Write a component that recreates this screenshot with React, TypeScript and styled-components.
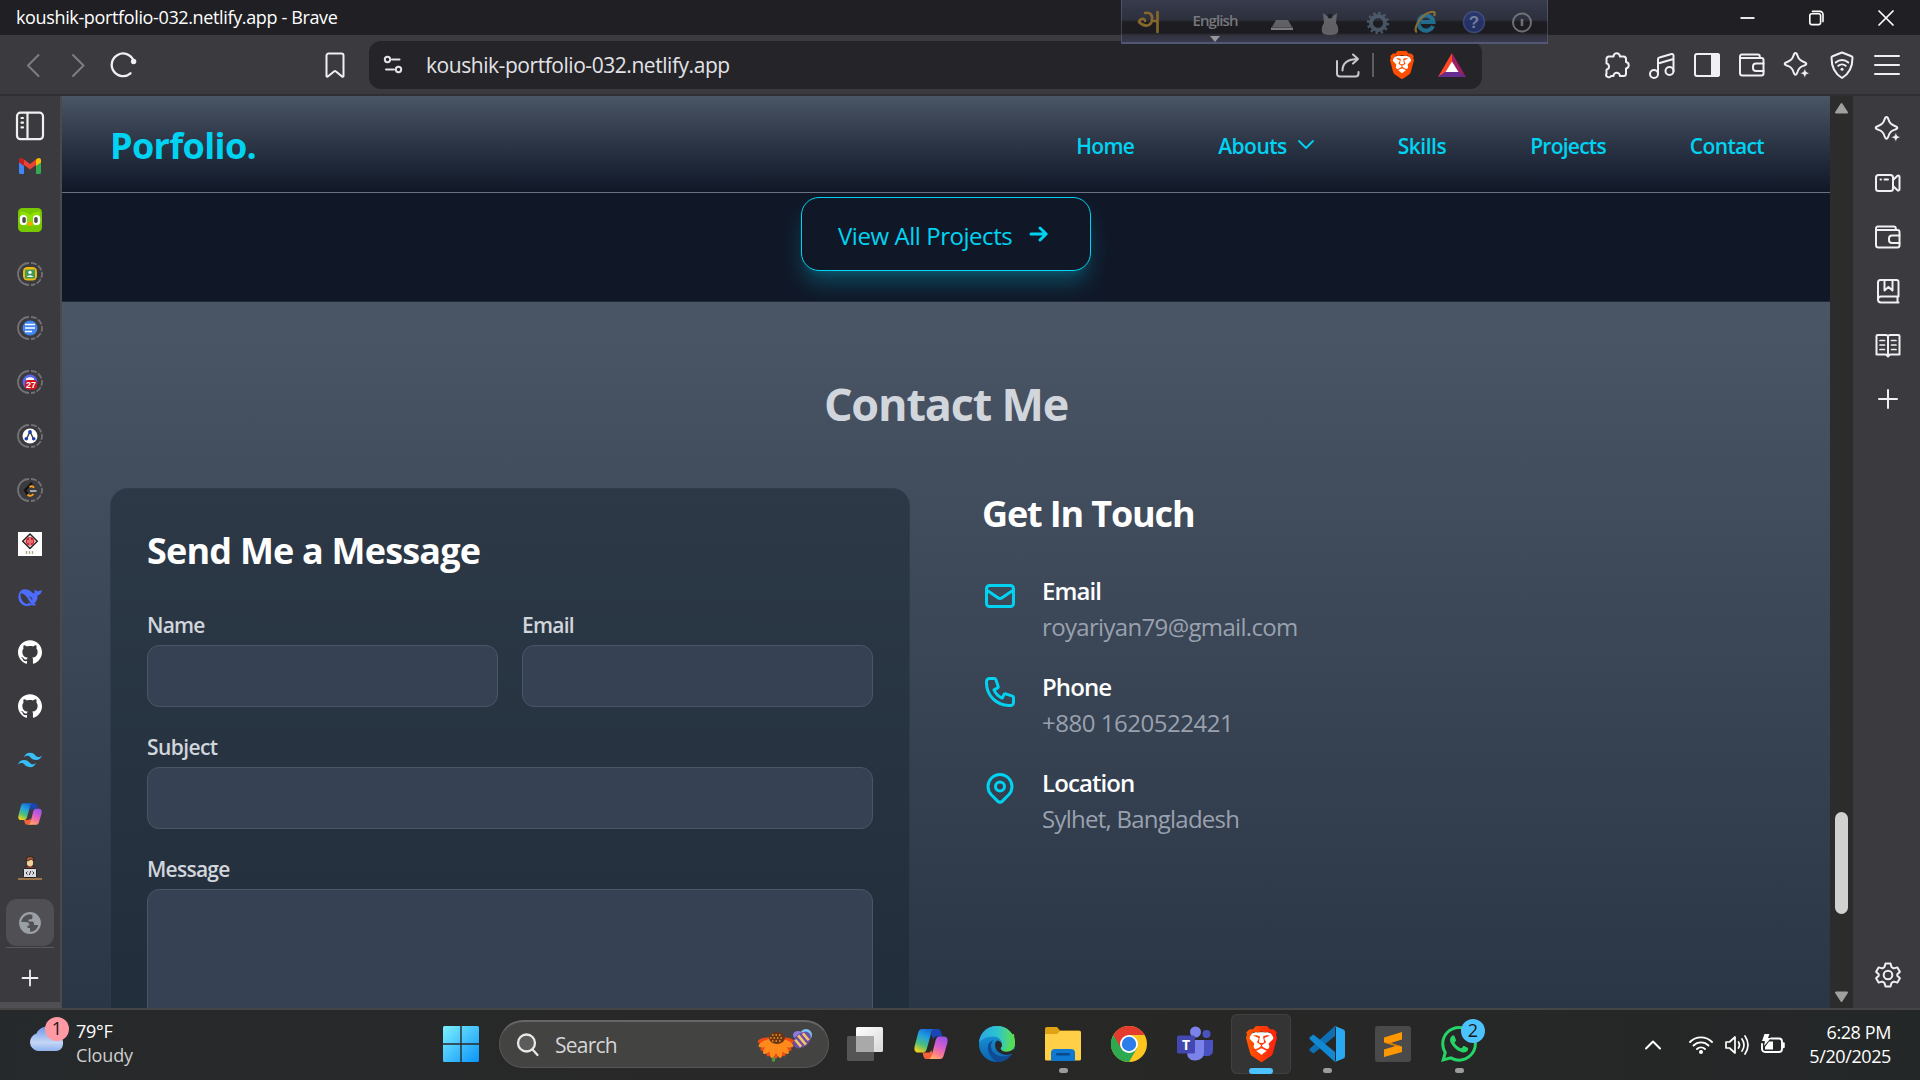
import React from "react";
import styled, { createGlobalStyle, css } from "styled-components";
import { SiBrave, SiTailwindcss, SiGithub, SiWhatsapp } from "react-icons/si";

const CYAN = "#00d3f2";
const CHROME = "#3b3a3e";
const ICON = "#f0f0f2";

const GlobalStyle = createGlobalStyle`
  *, *::before, *::after { box-sizing: border-box; }
  body { margin: 0; overflow: hidden; background: ${CHROME}; font-family: "Open Sans", "Noto Sans", sans-serif; }
  svg { display: block; flex: none; overflow: visible; }
  h1, h2, h3, p { margin: 0; }
`;

/* ---------- window ---------- */
const Desktop = styled.div`
  width: 1920px;
  height: 1080px;
  display: flex;
  flex-direction: column;
  position: relative;
  overflow: hidden;
`;
const TitleBar = styled.header`
  height: 35px;
  flex: none;
  background: #201f24;
  display: flex;
  align-items: center;
  justify-content: space-between;
  padding: 0 26px 0 16px;
`;
const WindowTitle = styled.div`
  color: #fff;
  font-size: 18px;
  letter-spacing: -0.36px;
  line-height: 35px;
`;
const WindowButtons = styled.div`
  display: flex;
  align-items: center;
  gap: 54px;
`;
const Toolbar = styled.div`
  height: 61px;
  flex: none;
  background: ${CHROME};
  border-bottom: 2px solid #302f33;
  display: flex;
  align-items: center;
  padding: 0 20px 0 21px;
`;
const NavButtons = styled.div`
  display: flex;
  align-items: center;
  gap: 20px;
  width: 303px;
`;
const BookmarkSlot = styled.div`
  width: 45px;
`;
const AddressBar = styled.div`
  width: 1113px;
  height: 48px;
  border-radius: 12px;
  background: #252429;
  display: flex;
  align-items: center;
  padding: 0 16px 0 14px;
`;
const Url = styled.span`
  color: #e3e3e6;
  font-size: 21px;
  letter-spacing: -0.45px;
  margin-left: 23px;
  flex: 1;
`;
const Divider = styled.span`
  width: 2px;
  height: 24px;
  background: #5e5d62;
  margin: 0 16px 0 11px;
`;
const Triangle = styled.svg`
  margin-left: 24px;
`;
const ToolbarIcons = styled.div`
  display: flex;
  align-items: center;
  gap: 17px;
  margin-left: auto;
`;
const Body = styled.div`
  height: 912px;
  flex: none;
  display: flex;
`;

/* ---------- side bars ---------- */
const TabRail = styled.aside`
  width: 62px;
  flex: none;
  background: ${CHROME};
  border-right: 2px solid #4a494d;
  border-bottom: 6px solid #505054;
  display: flex;
  flex-direction: column;
  align-items: center;
`;
const RailToggle = styled.div`
  height: 43px;
  padding-top: 15px;
`;
const Tab = styled.div`
  height: 54px;
  width: 60px;
  flex: none;
  display: flex;
  align-items: center;
  justify-content: center;
`;
const ActiveTab = styled(Tab)`
  width: 48px;
  height: 47px;
  margin-top: 4px;
  border-radius: 11px;
  background: #505054;
`;
const RailRule = styled.div`
  width: 48px;
  height: 1px;
  background: #59585c;
  margin-top: 1px;
`;
const NewTab = styled(Tab)`
  padding-top: 6px;
`;
const SideRail = styled.aside`
  width: 67px;
  flex: none;
  background: ${CHROME};
  display: flex;
  flex-direction: column;
  align-items: center;
  padding: 6px 0 6px 2px;
`;
const SideItem = styled(Tab)<{ $last?: boolean }>`
  ${(p) => p.$last && css`margin-top: auto;`}
`;
const ScrollTrack = styled.div`
  width: 23px;
  flex: none;
  background: #2c2c2c;
  display: flex;
  flex-direction: column;
  align-items: center;
  justify-content: space-between;
  padding: 6px 0 5px;
`;
const ScrollThumb = styled.div`
  width: 13px;
  height: 102px;
  border-radius: 7px;
  background: #d1d1d1;
  margin-top: 620px;
`;

/* ---------- web page ---------- */
const Page = styled.main`
  width: 1768px;
  flex: none;
  overflow: hidden;
  background: #101828;
`;
const SiteHeader = styled.nav`
  height: 97px;
  background: linear-gradient(in oklab to bottom, #4a5565, #101828);
  border-bottom: 1px solid #6a7282;
  display: flex;
  align-items: center;
  justify-content: space-between;
  padding: 3px 66px 0 48px;
`;
const Brand = styled.h1`
  color: ${CYAN};
  font-size: 36px;
  font-weight: 700;
  letter-spacing: -0.65px;
`;
const Links = styled.div`
  display: flex;
  gap: 84px;
`;
const NavLink = styled.a<{ $ls?: number }>`
  display: flex;
  align-items: center;
  gap: 11px;
  color: ${CYAN};
  font-size: 21px;
  font-weight: 600;
  letter-spacing: ${(p) => p.$ls ?? -0.7}px;
  line-height: 30px;
`;
const ProjectsEnd = styled.section`
  height: 109px;
  padding-top: 4px;
  display: flex;
  justify-content: center;
  align-items: flex-start;
  border-bottom: 1px solid #1e2939;
  overflow: hidden;
`;
const ViewAll = styled.button`
  width: 290px;
  height: 74px;
  border: 1px solid ${CYAN};
  border-radius: 18px;
  background: #101828;
  color: ${CYAN};
  font: 400 24px "Open Sans", "Noto Sans", sans-serif;
  letter-spacing: -0.45px;
  display: flex;
  align-items: center;
  gap: 17px;
  padding: 2px 0 0 36px;
  box-shadow: 0 15px 22px -4px rgba(0, 184, 219, 0.32), 0 6px 9px -6px rgba(0, 184, 219, 0.25);
  svg { margin-top: -3px; }
`;
const ContactSection = styled.section`
  height: 970px;
  padding: 72px 48px;
  background: linear-gradient(to bottom, #4a5565, #1e2939);
`;
const SectionTitle = styled.h2`
  color: #d1d5dc;
  font-size: 45px;
  line-height: 60px;
  font-weight: 700;
  letter-spacing: -1.2px;
  text-align: center;
  margin-bottom: 54px;
`;
const Columns = styled.div`
  display: grid;
  grid-template-columns: 800px 800px;
  gap: 72px;
`;
const FormCard = styled.form`
  border: 1px solid rgba(54, 65, 83, 0.6);
  border-radius: 18px;
  padding: 36px;
  height: 720px;
  background: rgba(27, 39, 51, 0.53);
`;
const CardTitle = styled.h3<{ $ls?: number }>`
  color: #fff;
  font-size: 36px;
  line-height: 48px;
  padding-top: 2px;
  height: 48px;
  font-weight: 700;
  letter-spacing: ${(p) => p.$ls ?? -0.8}px;
`;
const FormGrid = styled.div`
  display: grid;
  grid-template-columns: 1fr 1fr;
  gap: 24px;
  margin-top: 36px;
`;
const Field = styled.label<{ $wide?: boolean; $ls: number }>`
  display: flex;
  flex-direction: column;
  gap: 5px;
  padding-top: 1px;
  color: #d1d5dc;
  font-size: 21px;
  line-height: 30px;
  font-weight: 600;
  letter-spacing: ${(p) => p.$ls}px;
  ${(p) => p.$wide && css`grid-column: span 2;`}
`;
const Input = styled.input`
  height: 62px;
  width: 100%;
  border: 1px solid #4a5565;
  border-radius: 12px;
  background: #364153;
`;
const TextArea = styled.textarea`
  height: 190px;
  width: 100%;
  border: 1px solid #4a5565;
  border-radius: 12px;
  background: #364153;
  resize: none;
`;
const ContactList = styled.div`
  display: flex;
  flex-direction: column;
  gap: 24px;
  margin-top: 37px;
`;
const ContactRow = styled.div`
  display: flex;
  gap: 24px;
  svg { margin-top: 5px; }
`;
const RowTitle = styled.p`
  color: #fff;
  font-size: 24px;
  line-height: 36px;
  font-weight: 600;
  letter-spacing: -0.9px;
`;
const RowValue = styled.p<{ $ls: number }>`
  color: #99a1af;
  font-size: 24px;
  line-height: 36px;
  letter-spacing: ${(p) => p.$ls}px;
`;

/* ---------- floating language bar ---------- */
const LanguageBar = styled.div`
  position: absolute;
  left: 1121px;
  top: 0;
  width: 427px;
  height: 44px;
  border: 1px solid rgba(120, 125, 155, 0.4);
  border-top: none;
  border-bottom: 2px solid rgba(90, 96, 130, 0.75);
  background: linear-gradient(to bottom, rgba(58, 62, 80, 0.9) 0, rgba(46, 49, 62, 0.9) 20px, rgba(28, 28, 33, 0.95) 22px, rgba(28, 28, 32, 0.95) 33px, rgba(48, 49, 60, 0.95) 35px, rgba(56, 58, 78, 0.95) 100%);
  display: flex;
  align-items: flex-start;
  padding: 10px 0 0 15px;
`;
const LanguageName = styled.div`
  display: flex;
  flex-direction: column;
  align-items: center;
  gap: 6px;
  width: 46px;
  margin: 0 31px 0 33px;
  color: #77787d;
  font-size: 15px;
  line-height: 20px;
  font-weight: 600;
  letter-spacing: -0.9px;
`;
const LanguageTools = styled.div`
  display: flex;
  opacity: 0.75;
`;
const Tool = styled.span`
  width: 48px;
  display: flex;
  justify-content: center;
  &:first-child { width: 49px; margin-left: -12px; }
`;

/* ---------- taskbar ---------- */
const Taskbar = styled.footer`
  height: 72px;
  flex: none;
  border-top: 2px solid #454545;
  background: linear-gradient(to right, #26292b, #282828 35%, #272726 65%, #242728);
  display: flex;
  align-items: flex-start;
`;
const Weather = styled.div`
  width: 431px;
  height: 70px;
  padding: 9px 0 0 28px;
  display: flex;
  gap: 7px;
`;
const WeatherIcon = styled.div`
  position: relative;
  width: 41px;
  height: 44px;
`;
const Badge = styled.span<{ $color: string; $x: number; $y: number }>`
  position: absolute;
  left: ${(p) => p.$x}px;
  top: ${(p) => p.$y}px;
  width: 24px;
  height: 24px;
  border-radius: 50%;
  background: ${(p) => p.$color};
  color: #1a1a1a;
  font-size: 18px;
  line-height: 23px;
  text-align: center;
`;
const Lines = styled.div<{ $right?: boolean }>`
  color: #fff;
  font-size: 18px;
  line-height: 24px;
  letter-spacing: ${(p) => (p.$right ? -0.4 : -0.3)}px;
  text-align: ${(p) => (p.$right ? "right" : "left")};
  ${(p) => p.$right && css`margin-top: -2px;`}
`;
const Muted = styled.div`
  color: #cfcfcf;
  letter-spacing: -0.15px;
`;
const Dock = styled.div`
  display: flex;
  gap: 6px;
  padding-top: 4px;
`;
const DockItem = styled.div<{ $active?: boolean }>`
  position: relative;
  width: 60px;
  height: 60px;
  border-radius: 6px;
  display: flex;
  align-items: center;
  justify-content: center;
  ${(p) => p.$active && css`
    background: #343434;
    box-shadow: inset 0 0 0 1px #404040;
  `}
`;
const Running = styled.span<{ $active?: boolean }>`
  position: absolute;
  bottom: ${(p) => (p.$active ? 0 : 1)}px;
  left: ${(p) => (p.$active ? 18 : 25.5)}px;
  width: ${(p) => (p.$active ? 24 : 9)}px;
  height: ${(p) => (p.$active ? 6 : 5)}px;
  border-radius: 3px;
  background: ${(p) => (p.$active ? "#4cc2ff" : "#9c9c9c")};
`;
const SearchBox = styled.div`
  width: 330px;
  height: 48px;
  margin: 6px 0 0 2px;
  border-radius: 24px;
  border: 1px solid #575757;
  border-top: 2px solid #666;
  background: #434342;
  display: flex;
  align-items: center;
  padding: 0 13px 0 16px;
  gap: 15px;
  color: #d6d6d6;
  font-size: 21px;
  letter-spacing: -0.75px;
  span { flex: 1; }
`;
const Tray = styled.div`
  margin-left: auto;
  display: flex;
  align-items: center;
  height: 70px;
  padding-right: 29px;
`;
const TrayChevron = styled.div`
  margin-right: 27px;
`;
const TrayIcons = styled.div`
  display: flex;
  gap: 12px;
  margin-right: 24px;
`;

/* ---------- icon helpers ---------- */
type IconProps = { w?: number; h?: number; sw?: number; color?: string; children: React.ReactNode };
const Line = ({ w = 28, h = 28, sw = 2, color = ICON, children }: IconProps) => (
  <svg width={w} height={h} viewBox={`0 0 ${w} ${h}`} fill="none" stroke={color} strokeWidth={sw} strokeLinecap="round" strokeLinejoin="round">
    {children}
  </svg>
);
const Sparkle = () => (
  <Line>
    <path d="M12.500 2c1 0 1.500 1 2 2.600 1 3.600 2.200 5 5.800 6.100 1.900.6 3 1.100 3 2.100s-1.100 1.500-3 2.100c-3.500 1.100-4.800 2.500-5.800 6.100-.5 1.600-1 2.700-2 2.700s-1.500-1.100-2-2.700c-1-3.600-2.200-5-5.800-6.100-1.900-.6-3-1.100-3-2.100s1.100-1.500 3-2.100c3.500-1.100 4.800-2.500 5.800-6.100.5-1.600 1-2.600 2-2.600z" />
    <path d="M21.800 17.600l1.400 3.200 3.200 1.400-3.200 1.400-1.400 3.200-1.400-3.200-3.200-1.400 3.200-1.400z" fill={ICON} stroke={CHROME} strokeWidth={0.5} />
  </Line>
);
const Wallet = () => (
  <Line>
    <path d="M2 6.500v15.500a2.500 2.500 0 0 0 2.500 2.500h19a2 2 0 0 0 2-2V9a2 2 0 0 0-2-2H3.500A1.500 1.500 0 0 1 2 5.500 1.800 1.800 0 0 1 3.800 3.500h16a2 2 0 0 1 2 2V7" />
    <path d="M25.500 12.500H18a3 3 0 0 0-3 3v1.500a3 3 0 0 0 3 3h7.500" />
  </Line>
);
const BraveLogo = ({ w, h, a, b }: { w: number; h: number; a: string; b: string }) => (
  <svg width={w} height={h} viewBox="1.8 0 20.400 24" preserveAspectRatio="none">
    <defs>
      <linearGradient id={"brave" + w} x1="0" x2="1"><stop stopColor={a} /><stop offset="1" stopColor={b} /></linearGradient>
    </defs>
    <path d="M5 5.200l3-1h8l3 1 1.200 3-3.200 10-5 3.500-5-3.500L3.800 8.200z" fill="#fff" />
    <SiBrave x={0} y={0} width={24} height={24} size={24} style={{ fill: `url(#brave${w})` }} />
  </svg>
);
const Copilot = ({ s, id }: { s: number; id: string }) => (
  <svg width={s} height={s} viewBox="0 0 36 36">
    <defs>
      <linearGradient id={id + "l"} x1=".7" y1="0" x2=".3" y2="1">
        <stop offset="0" stopColor="#1568d8" /><stop offset=".35" stopColor="#22a0e0" /><stop offset=".7" stopColor="#4fbf7a" /><stop offset="1" stopColor="#f2cf1c" />
      </linearGradient>
      <linearGradient id={id + "r"} x1=".7" y1="0" x2=".3" y2="1">
        <stop offset="0" stopColor="#9a55e8" /><stop offset=".4" stopColor="#d45bd0" /><stop offset=".75" stopColor="#fb7b8c" /><stop offset="1" stopColor="#ffb067" />
      </linearGradient>
    </defs>
    <path d="M20 2h5c2.200 0 3.200 1.700 3.700 3.400L30 10h-6c-2 0-3 1-3.600 3L18 8z" fill="#1b45b4" />
    <path d="M9 27h6c2 0 2.600-1 3.200-3l2 6c-.8 2.800-2 4-4.200 4h-3c-2.400 0-3-3-4-7z" fill="#f4603a" />
    <path d="M8.500 2H22c-2.200 0-3.100 1.600-3.800 4l-4.600 17c-.7 2.500-1.800 4-4.300 4H4.500C.5 27-.2 23.500.8 19.800L4.300 6.500C5.200 3.300 6 2 8.500 2z" fill={`url(#${id}l)`} />
    <path d="M27.500 34H15c2.200 0 3.100-1.600 3.800-4l4.100-16c.7-2.500 1.800-4 4.300-4h4.300c4 0 4.700 3.500 3.700 7.200L31.700 29.500C30.800 32.700 30 34 27.500 34z" fill={`url(#${id}r)`} />
  </svg>
);
const Ringed = ({ children }: { children: React.ReactNode }) => (
  <svg width={24} height={24} viewBox="0 0 24 24">
    <path d="M11 1A11 11 0 0 0 11 23" fill="none" stroke="#727176" strokeWidth={1.800} />
    <path d="M13 1A11 11 0 0 1 13 23" fill="none" stroke="#727176" strokeWidth={1.800} strokeDasharray="6 1.500" />
    {children}
  </svg>
);
const Arrow = ({ down }: { down?: boolean }) => (
  <svg width={15} height={12} viewBox="0 0 15 12">
    <path d={down ? "M2 1.500h11L7.500 10z" : "M2 10.500h11L7.500 2z"} fill="#a0a0a0" stroke="#a0a0a0" strokeWidth={2} strokeLinejoin="round" />
  </svg>
);

const contacts = [
  {
    title: "Email", value: "royariyan79@gmail.com", ls: -0.67,
    paths: ["M3 8l7.890 5.260a2 2 0 002.220 0L21 8M5 19h14a2 2 0 002-2V7a2 2 0 00-2-2H5a2 2 0 00-2 2v10a2 2 0 002 2z"],
  },
  {
    title: "Phone", value: "+880 1620522421", ls: -0.48,
    paths: ["M3 5a2 2 0 012-2h3.280a1 1 0 01.948.684l1.498 4.493a1 1 0 01-.502 1.210l-2.257 1.130a11.042 11.042 0 005.516 5.516l1.130-2.257a1 1 0 011.210-.502l4.493 1.498a1 1 0 01.684.949V19a2 2 0 01-2 2h-1C9.716 21 3 14.284 3 6V5z"],
  },
  {
    title: "Location", value: "Sylhet, Bangladesh", ls: -0.75,
    paths: ["M17.657 16.657L13.414 20.900a1.998 1.998 0 01-2.827 0l-4.244-4.243a8 8 0 1111.314 0z", "M15 11a3 3 0 11-6 0 3 3 0 016 0z"],
  },
];

function BrowserChrome() {
  return (
    <>
      <TitleBar>
        <WindowTitle>koushik-portfolio-032.netlify.app - Brave</WindowTitle>
        <WindowButtons>
          <Line w={15} h={16} sw={1.800} color="#fff"><path d="M0.500 8h14" strokeLinecap="butt" /></Line>
          <Line w={15} h={16} sw={1.600} color="#fff">
            <rect x="0.800" y="3.800" width="10.800" height="10.800" rx="2" />
            <path d="M3.500 1.400H11a3 3 0 0 1 3 3v7.200" />
          </Line>
          <Line w={16} h={16} sw={1.700} color="#fff"><path d="M1 1l14 14M15 1L1 15" /></Line>
        </WindowButtons>
      </TitleBar>
      <Toolbar>
        <NavButtons>
          <Line w={24} h={28} color="#7e7d82"><path d="M17.500 4L7 14.500 17.500 25" /></Line>
          <Line w={24} h={28} color="#7e7d82"><path d="M8 4l10.500 10.500L8 25" /></Line>
          <Line w={28} h={28} sw={2.300}>
            <path d="M21.500 22.300A11.300 11.300 0 1 1 24.500 9.500" />
            <circle cx="24.600" cy="10.500" r="2.700" fill={ICON} stroke="none" />
          </Line>
        </NavButtons>
        <BookmarkSlot>
          <Line w={22} h={28}><path d="M2.500 25V4.500a2 2 0 0 1 2-2h13a2 2 0 0 1 2 2V25a.8.8 0 0 1-1.300.600L12 20.500a1.500 1.500 0 0 0-2 0l-6.200 5.100A.8.8 0 0 1 2.500 25z" /></Line>
        </BookmarkSlot>
        <AddressBar>
          <Line w={20} h={20} color="#e3e3e6">
            <circle cx="4.500" cy="4.500" r="2.700" /><path d="M9 4.500h7.500" />
            <circle cx="15.500" cy="14.500" r="2.700" /><path d="M3 14.500h8" />
          </Line>
          <Url>koushik-portfolio-032.netlify.app</Url>
          <Line w={26} h={26} color="#c9c9cc">
            <path d="M2 9v12.500a3 3 0 0 0 3 3h15.500a3 3 0 0 0 3-3V20" />
            <path d="M7.500 18.500C7.500 10.500 13 7 23 7M18 2.500L23 7l-5 4.500" />
          </Line>
          <Divider />
          <BraveLogo w={24} h={28} a="#ff5000" b="#ff4b00" />
          <Triangle width={28} height={24} viewBox="0 0 28 24">
            <path d="M14 0L0 24l8-5 6-10z" fill="#ff4724" />
            <path d="M14 0l14 24-8-5-6-10z" fill="#9e1f63" />
            <path d="M0 24h28l-8-5.500H8z" fill="#662d91" />
            <path d="M14 8.500L20.500 19h-13z" fill="#fff" />
          </Triangle>
        </AddressBar>
        <ToolbarIcons>
          <Line>
            <path d="M8.500 5.500h2a3.200 3.200 0 0 1 6.400 0h3.600a2.500 2.500 0 0 1 2.500 2.500v3a3.300 3.300 0 0 1 0 6.500v5a2.500 2.500 0 0 1-2.500 2.500h-3.600a3.200 3.200 0 0 0-6.400 0h-2.500A2.500 2.500 0 0 1 3.500 22.500v-3.700a3.300 3.300 0 0 0 0-6.400V8A2.500 2.500 0 0 1 6 5.500z" />
          </Line>
          <Line><circle cx="6" cy="23" r="4" /><circle cx="21.500" cy="20" r="4" /><path d="M10 23V8.500a2 2 0 0 1 1.500-2l12-3.500a1.500 1.500 0 0 1 2 1.500V20M10 12.500l15.500-4.500" /></Line>
          <Line><rect x="2" y="3" width="24" height="22" rx="2" /><path d="M19 3h5a2 2 0 0 1 2 2v18a2 2 0 0 1-2 2h-5z" fill={ICON} /></Line>
          <Wallet />
          <Sparkle />
          <Line sw={2}>
            <path d="M14 1.500l9.500 3.700a1.500 1.500 0 0 1 1 1.500C24.500 16 21.500 22.500 14 27 6.500 22.500 3.500 16 3.500 6.700a1.500 1.500 0 0 1 1-1.500z" />
            <path d="M7.700 11.500a9.500 9.500 0 0 1 12.600 0M10.300 14.800a5.600 5.600 0 0 1 7.400 0" />
            <circle cx="14" cy="18.200" r="1.500" fill={ICON} stroke="none" />
          </Line>
          <Line w={27}><path d="M2 5h24M2 14h24M2 23h24" /></Line>
        </ToolbarIcons>
      </Toolbar>
    </>
  );
}

function LeftRail() {
  return (
    <TabRail>
      <RailToggle>
        <Line w={30} h={30} sw={2.200}>
          <rect x="2" y="1.700" width="26" height="26.500" rx="3.500" />
          <path d="M12.500 2v26" /><path d="M6.500 7h1.500M6.500 11.700h1.500M6.500 16.400h1.500" />
        </Line>
      </RailToggle>
      <Tab>
        <svg width={22} height={16} viewBox="0 0 22 16">
          <path d="M0 3v11.500A1.500 1.500 0 0 0 1.500 16H5V7z" fill="#4285f4" />
          <path d="M22 3v11.500a1.500 1.500 0 0 1-1.500 1.500H17V7z" fill="#34a853" />
          <path d="M4.500 6.500V1L11 6l6.500-5v5.500L11 11.500z" fill="#ea4335" />
          <path d="M0 4.500V2C0 .2 2.200-.7 3.700.500L5 1.500V8L0 4.500z" fill="#c5221f" />
          <path d="M22 4.500V2c0-1.800-2.200-2.700-3.700-1.500L17 1.500V8l5-3.500z" fill="#fbbc04" />
        </svg>
      </Tab>
      <Tab>
        <svg width={24} height={24} viewBox="0 0 24 24">
          <rect width="24" height="24" rx="4.500" fill="#78c800" />
          <path d="M2 3.500c4 0 8 1.500 10 3.500 2-2 6-3.500 10-3.500-1 3 1 14-5 14H7C1 17.500 3 6.500 2 3.500z" fill="#8ee000" />
          <rect x="1.800" y="7" width="7.200" height="10" rx="3.600" fill="#fff" /><rect x="15" y="7" width="7.200" height="10" rx="3.600" fill="#fff" />
          <rect x="4.300" y="9" width="3.500" height="6" rx="1.700" fill="#4b4b4b" /><rect x="16.200" y="9" width="3.500" height="6" rx="1.700" fill="#4b4b4b" />
          <path d="M9.500 14.500q2.500-1.500 5 0-.500 3.500-2.500 3.500t-2.500-3.500z" fill="#ffa200" />
        </svg>
      </Tab>
      <Tab>
        <Ringed>
          <rect x="5" y="5" width="14" height="13.500" rx="4.500" fill="#f0b90c" /><rect x="7" y="7.500" width="10" height="9" fill="#3f9b5d" />
          <circle cx="12" cy="10.300" r="1.600" fill="#fff" /><path d="M8.500 15q3.500-3.500 7 0z" fill="#fff" />
        </Ringed>
      </Tab>
      <Tab>
        <Ringed>
          <circle cx="12" cy="12" r="7.500" fill="#4285f4" /><path d="M7 8.500h10M7 12h10M7 15.500h7" stroke="#fff" strokeWidth={1.700} />
        </Ringed>
      </Tab>
      <Tab>
        <Ringed>
          <circle cx="12" cy="12" r="7.500" fill="#5865f2" /><path d="M8 8.500q4-2.500 8 0v2H8z" fill="#fff" />
          <rect x="7" y="10" width="12" height="9.500" rx="3" fill="#d8121c" />
          <text x="13" y="18" fontSize="9" fontWeight="700" textAnchor="middle" fill="#fff" fontFamily="Liberation Sans">27</text>
        </Ringed>
      </Tab>
      <Tab>
        <Ringed>
          <circle cx="12" cy="12" r="7.500" fill="#fff" /><path d="M12 7.500L8.500 15M12 7.500L15.500 15" stroke="#444" strokeWidth={1.500} />
          <circle cx="12" cy="8" r="1.900" fill="#1d3fa8" /><circle cx="8.300" cy="14.800" r="1.800" fill="#1d3fa8" /><circle cx="15.700" cy="14.800" r="1.800" fill="#1d3fa8" />
        </Ringed>
      </Tab>
      <Tab>
        <Ringed>
          <path d="M13.500 5.500L7 12.200l2.500 4" stroke="#111" strokeWidth={2.300} fill="none" strokeLinecap="round" />
          <path d="M11.500 9q2.700-1.800 4.500.800M9.500 16.500q3 3 6-.500" stroke="#f89f1b" strokeWidth={1.900} fill="none" />
          <path d="M12 13h6.500" stroke="#b3b3b3" strokeWidth={1.800} />
        </Ringed>
      </Tab>
      <Tab>
        <svg width={24} height={24} viewBox="0 0 24 24">
          <rect width="24" height="24" fill="#fff" />
          <path d="M12 2l7.300 7.300-7.300 7.300-7.300-7.300z" fill="#f6d9dc" stroke="#222" strokeWidth={1.400} />
          <circle cx="12" cy="9.300" r="4.300" fill="#d2232f" /><path d="M12 5.500v7.600M10 8v3M14 8v3" stroke="#fff" strokeWidth={0.700} />
          <path d="M8.500 19v3M11.500 19v3M14.500 19v3" stroke="#b6a884" strokeWidth={1.400} />
        </svg>
      </Tab>
      <Tab>
        <svg width={24} height={20} viewBox="0 0 24 20">
          <path d="M2.500 3C5 .5 9.500 1 13 3.500c1 .7 1.300 1.500 2.500 1.700 1.300.2 1.500-2 .8-4 1.200.5 1.700 1.500 2.700 1.800 1.500.5 3-.2 5-1-.3 3-2 5-4.500 5.500.3 4-1.500 6.500-3.300 8 .8.7 1.800.8 2.300 1.200-1.500 1-3 1-4.700.2C9 19.500 3 17.500 1 12.500-.2 9 .3 5.200 2.500 3z" fill="#4d6bfe" />
          <path d="M2.500 5.500c3-.3 6 2.500 8 6.200.9 1.800 1.800 2.800 3 3.600-1.200.5-2.500 0-3.500-1l-.5 2C5.500 15.500 2.200 11 2.500 5.500z" fill={CHROME} />
          <path d="M11.500 9q2 .3 2.700 2.500" stroke={CHROME} strokeWidth={1.100} fill="none" />
        </svg>
      </Tab>
      <Tab><SiGithub size={24} color="#fff" /></Tab>
      <Tab><SiGithub size={24} color="#fff" /></Tab>
      <Tab><SiTailwindcss size={24} color="#38bdf8" /></Tab>
      <Tab><Copilot s={24} id="tab" /></Tab>
      <Tab>
        <svg width={24} height={24} viewBox="0 0 24 24">
          <path d="M6 13q1-3 4-3h4q3 0 4 3z" fill="#8b3a34" stroke="#222" />
          <rect x="9" y="2" width="6" height="8.500" rx="3" fill="#f2cf9b" /><path d="M8 5q0-4.500 4-4.500T16 5q-2-1-3-2-2 2-5 2z" fill="#a2593a" stroke="#2b1a14" strokeWidth={0.800} />
          <rect x="5.500" y="12.500" width="13" height="9" rx="1" fill="#d9dbe0" stroke="#222" />
          <path d="M9.500 15.500L8 17l1.500 1.500M14.500 15.500L16 17l-1.500 1.500M12.700 15l-1.400 4" stroke="#222" strokeWidth={0.900} fill="none" />
          <path d="M0 23h24" stroke="#9a7444" strokeWidth={2} />
        </svg>
      </Tab>
      <ActiveTab>
        <svg width={22} height={22} viewBox="0 0 22 22">
          <circle cx="11" cy="11" r="9.800" fill="none" stroke="#9aa0a6" strokeWidth={2.200} />
          <path d="M1.500 10h6q3 .5 3 3.500H8.500v2.500h2.500v4.500Q2 20 1.500 10zM11 2.500q2.500 0 2.500 1.500v1.500q0 2-2.500 2H9.500v2h3.500q2 0 2 2v1.500h3q1.500 0 2 1Q23 7 16 2.500z" fill="#9aa0a6" />
        </svg>
      </ActiveTab>
      <RailRule />
      <NewTab><Line w={18} h={18} sw={1.800}><path d="M9 1.500v15M1.500 9h15" /></Line></NewTab>
    </TabRail>
  );
}

function RightRail() {
  return (
    <SideRail>
      <SideItem><Sparkle /></SideItem>
      <SideItem>
        <Line><rect x="2" y="6" width="17" height="16" rx="2.500" /><path d="M19 11l4.500-4.200a1.200 1.200 0 0 1 2 .9v12.600a1.200 1.200 0 0 1-2 .9L19 17" /><path d="M6.500 10.500h.5M10.500 10.500h3.500" /></Line>
      </SideItem>
      <SideItem><Wallet /></SideItem>
      <SideItem>
        <Line><path d="M4 23V5.500A2.500 2.500 0 0 1 6.500 3h16a2 2 0 0 1 2 2v14.500H7a3 3 0 0 0 0 6h17.500M23.500 20v5" /><path d="M10.500 3v10.500l4-3.500 4 3.500V3" /></Line>
      </SideItem>
      <SideItem>
        <Line>
          <path d="M14 4.500v20.500M14 5a3 3 0 0 0-2-1H3.500a1 1 0 0 0-1 1v18.500h9.500l2 2 2-2h9.500V5a1 1 0 0 0-1-1H16a3 3 0 0 0-2 1z" />
          <path d="M6 9.500h4.500M6 14h4.500M6 18.500h4.500M17.500 9.500H22M17.500 14H22M17.500 18.500H22" strokeWidth={1.700} />
        </Line>
      </SideItem>
      <SideItem><Line w={22} h={22}><path d="M11 2v18M2 11h18" /></Line></SideItem>
      <SideItem $last>
        <Line>
          <circle cx="14" cy="14" r="4.300" />
          <path d="M11.500 2.500h5l1 3.600 2.300 1.300 3.600-1 2.500 4.300-2.600 2.600v1.400l2.600 2.600-2.500 4.300-3.600-1-2.300 1.300-1 3.600h-5l-1-3.600-2.300-1.300-3.600 1L2.100 17.300l2.600-2.600v-1.400l-2.600-2.600 2.500-4.300 3.600 1 2.300-1.300z" />
        </Line>
      </SideItem>
    </SideRail>
  );
}

function PortfolioPage() {
  return (
    <Page>
      <SiteHeader>
        <Brand>Porfolio.</Brand>
        <Links>
          <NavLink>Home</NavLink>
          <NavLink $ls={-0.5}>
            Abouts
            <Line w={16} h={16} sw={1.800} color={CYAN}><path d="M1 3l7 7 7-7" /></Line>
          </NavLink>
          <NavLink $ls={-0.5}>Skills</NavLink>
          <NavLink $ls={-0.75}>Projects</NavLink>
          <NavLink $ls={-0.65}>Contact</NavLink>
        </Links>
      </SiteHeader>
      <ProjectsEnd>
        <ViewAll type="button">
          View All Projects
          <Line w={19} h={18} sw={3} color={CYAN}><path d="M2 9h15M11 3l6.200 6L11 15" /></Line>
        </ViewAll>
      </ProjectsEnd>
      <ContactSection>
        <SectionTitle>Contact Me</SectionTitle>
        <Columns>
          <FormCard>
            <CardTitle>Send Me a Message</CardTitle>
            <FormGrid>
              <Field $ls={-0.8}>Name<Input /></Field>
              <Field $ls={-0.75}>Email<Input /></Field>
              <Field $wide $ls={-0.6}>Subject<Input /></Field>
              <Field $wide $ls={-0.75}>Message<TextArea /></Field>
            </FormGrid>
          </FormCard>
          <div>
            <CardTitle $ls={-1.15}>Get In Touch</CardTitle>
            <ContactList>
              {contacts.map((c) => (
                <ContactRow key={c.title}>
                  <svg width={36} height={36} viewBox="0 0 24 24" fill="none" stroke={CYAN} strokeWidth={2} strokeLinecap="round" strokeLinejoin="round">
                    {c.paths.map((d) => <path key={d} d={d} />)}
                  </svg>
                  <div>
                    <RowTitle>{c.title}</RowTitle>
                    <RowValue $ls={c.ls}>{c.value}</RowValue>
                  </div>
                </ContactRow>
              ))}
            </ContactList>
          </div>
        </Columns>
      </ContactSection>
    </Page>
  );
}

function InputLanguageBar() {
  return (
    <LanguageBar>
      <svg width={22} height={24} viewBox="0 0 22 24" fill="none" stroke="#86682c" strokeWidth={2.600} strokeLinecap="round">
        <path d="M8 3c5-1 8 2 7 7-1 6-7 8-13 2 1-4 6-4 6-1M15 11h4M20.500 2v20" />
      </svg>
      <LanguageName>
        English
        <svg width={10} height={6} viewBox="0 0 10 6"><path d="M0 0h10L5 6z" fill="#97979c" /></svg>
      </LanguageName>
      <LanguageTools>
        <Tool><svg width={24} height={26} viewBox="0 0 24 26"><path d="M6 10h12l4 7H2z" fill="#77787c" /><path d="M1 17.500h22v2.500H1z" fill="#9a9ba0" /></svg></Tool>
        <Tool><svg width={20} height={26} viewBox="0 0 20 26"><path d="M3 3l4 3h6l4-3-1 10q3 4 2 9-1 3-8 3t-8-3q-1-5 2-9z" fill="#77777c" /><circle cx="10" cy="6" r="2.500" fill="#1c1c20" /></svg></Tool>
        <Tool>
          <svg width={24} height={24} viewBox="0 0 24 24">
            <circle cx="12" cy="13" r="7" fill="none" stroke="#56677a" strokeWidth={4} />
            <circle cx="12" cy="13" r="9.700" fill="none" stroke="#56677a" strokeWidth={3} strokeDasharray="2.400 2.678" />
          </svg>
        </Tool>
        <Tool>
          <svg width={26} height={24} viewBox="0 0 26 24" fill="none">
            <path d="M20 16a7.500 7.500 0 1 1 .5-4H8" stroke="#2386b0" strokeWidth={4} />
            <path d="M4 22C-1 20 8 4 18 2c5-1 4 2 3 4" stroke="#a98434" strokeWidth={2.200} />
          </svg>
        </Tool>
        <Tool>
          <svg width={24} height={24} viewBox="0 0 24 24">
            <circle cx="12" cy="12" r="10.500" fill="#26387c" stroke="#48568e" strokeWidth={1.500} />
            <text x="12" y="18" fontSize="17" fontWeight="700" textAnchor="middle" fill="#8e98bd" fontFamily="Liberation Sans">?</text>
          </svg>
        </Tool>
        <Tool><svg width={24} height={24} viewBox="0 0 24 24"><circle cx="12" cy="12.500" r="9" fill="none" stroke="#8a8a8e" strokeWidth={2} /><path d="M12 9v7" stroke="#8a8a8e" strokeWidth={2.600} /></svg></Tool>
      </LanguageTools>
    </LanguageBar>
  );
}

const petals = [-100, -66, -33, 0, 33, 66, 100, -83, -50, -17, 17, 50, 83];

function WindowsTaskbar() {
  return (
    <Taskbar>
      <Weather>
        <WeatherIcon>
          <svg width={38} height={38} viewBox="0 0 38 38">
            <defs><linearGradient id="cloud" x1="0" y1="0" x2="0" y2="1"><stop stopColor="#6c97e6" /><stop offset=".65" stopColor="#c5d6f5" /><stop offset="1" stopColor="#8fb1ef" /></linearGradient></defs>
            <path d="M9.500 32a9 9 0 0 1-1-17.500 11 11 0 0 1 21 2A8 8 0 0 1 28.500 32z" fill="url(#cloud)" />
          </svg>
          <Badge $color="#ff99a4" $x={17} $y={-2}>1</Badge>
        </WeatherIcon>
        <Lines>79°F<Muted>Cloudy</Muted></Lines>
      </Weather>
      <Dock>
        <DockItem>
          <svg width={36} height={36} viewBox="0 0 36 36">
            <defs><linearGradient id="win" x1="0" y1="0" x2="1" y2="1"><stop stopColor="#7df0ff" /><stop offset="1" stopColor="#0a94f8" /></linearGradient></defs>
            <path d="M0 1.500Q0 0 1.500 0H17.300V17.300H0zM18.700 0H34.500Q36 0 36 1.500V17.300H18.700zM0 18.700H17.300V36H1.500Q0 36 0 34.500zM18.700 18.700H36V34.500Q36 36 34.500 36H18.700z" fill="url(#win)" />
          </svg>
        </DockItem>
        <SearchBox>
          <svg width={24} height={24} viewBox="0 0 24 24" fill="none" stroke="#e8e8e8" strokeWidth={2.300} strokeLinecap="round"><circle cx="10.500" cy="10" r="8.500" fill="#5c5c5c" /><path d="M16.500 16.500l5 5.500" /></svg>
          <span>Search</span>
          <svg width={58} height={36} viewBox="0 0 58 36">
            <path d="M17 24q1 6-1 10.500" stroke="#4f9a3a" strokeWidth={3} fill="none" />
            {petals.map((a, i) => <ellipse key={a} cx="19" cy="22" rx="3.400" ry="9.500" fill={i > 6 ? "#ff8a1c" : "#ef4a13"} transform={`rotate(${a * 0.85} 19 13)`} />)}
            <ellipse cx="20" cy="11" rx="8" ry="6" fill="#6b3412" />
            <path d="M13 11h14M15 8h10M15 14h10" stroke="#e89a2c" strokeWidth={1.300} strokeDasharray="1.500 2" />
            <ellipse cx="49" cy="8" rx="6" ry="6" fill="#7cc4f5" /><ellipse cx="41" cy="8" rx="5" ry="4" fill="#8c7be0" />
            <g transform="rotate(-40 45 13)"><ellipse cx="45" cy="13" rx="10" ry="7" fill="#6d4fa8" /><path d="M40 8.500v9M45 7v12M50 8.500v9" stroke="#f6c567" strokeWidth={2.600} /></g>
          </svg>
        </SearchBox>
        <DockItem>
          <svg width={36} height={36} viewBox="0 0 36 36">
            <defs><linearGradient id="tv" x1="0" y1="0" x2="1" y2="1"><stop stopColor="#fff" /><stop offset="1" stopColor="#d8d8d8" /></linearGradient></defs>
            <rect x="9" y="1" width="27" height="25" rx="1.500" fill="url(#tv)" />
            <rect x="0" y="10" width="27" height="25" rx="1.500" fill="#555" /><path d="M9 10h18v16H9z" fill="#a9a9a9" />
          </svg>
        </DockItem>
        <DockItem><Copilot s={34} id="dock" /></DockItem>
        <DockItem>
          <svg width={36} height={36} viewBox="0 0 36 36">
            <defs>
              <linearGradient id="eg" x1="0" y1=".3" x2="1" y2=".3"><stop stopColor="#2aa6e4" /><stop offset=".5" stopColor="#2cc3d0" /><stop offset="1" stopColor="#63e24a" /></linearGradient>
              <linearGradient id="eb" x1="0" y1="0" x2="0" y2="1"><stop stopColor="#1aa0e4" /><stop offset="1" stopColor="#0b63ad" /></linearGradient>
            </defs>
            <circle cx="18" cy="18" r="18" fill="url(#eb)" />
            <path d="M36 17c0 6-4 8.500-8.500 8.500-4 0-6-1.500-6-3 0-1 1.500-1.500 1.500-4.500 0-4-4-7.500-9-7.500C6 10.500 0 15 0 18 0 7 8 0 18 0s18 7.500 18 17z" fill="url(#eg)" />
            <path d="M14.500 14C11 17 11 23 15 27c4 4 11 4.500 17.500 1.500C29 33.500 24 36 18 36 12 32 8 26 9 20c.500-3 2.500-5 5.500-6z" fill="#0f4a93" />
            <path d="M33.800 27.500Q27 30.500 21 27q-5-3-5-8 0-2.500 2-4.500 4.500.500 5 4.500c0 2-1.500 2.500-1.500 3.500 0 1.500 2 3 6 3 3 0 5-.8 6.500-2.500L36 25z" fill="#282828" />
            <path d="M36 17c0 6-4 8.500-8.500 8.500-2 0-3.600-.4-4.700-1Q34 22 31 9l4-1z" fill="#55dc57" />
          </svg>
        </DockItem>
        <DockItem>
          <svg width={36} height={34} viewBox="0 0 36 34">
            <path d="M0 2q0-2 2-2h10l3 3.500h19q2 0 2 2V10H0z" fill="#e0a212" /><path d="M0 7h12l3-3h19q2 0 2 2v26q0 1.500-1.500 1.500h-33Q0 33.500 0 32z" fill="#ffcf48" />
            <path d="M6 34V26q0-4 4-4h16q4 0 4 4v8z" fill="#0f78d0" /><rect x="11" y="26" width="14" height="2.600" rx="1.300" fill="#0a4a8c" />
          </svg>
          <Running />
        </DockItem>
        <DockItem>
          <svg width={36} height={36} viewBox="0 0 36 36">
            <circle cx="18" cy="18" r="18" fill="#fcc61e" />
            <path d="M18 18L2.400 9A18 18 0 0 0 18 36l7.800-13.500z" fill="#2da94f" />
            <path d="M18 9h15.600A18 18 0 0 0 2.400 9L10.200 22.500z" fill="#e33b2e" />
            <circle cx="18" cy="18" r="9" fill="#fff" /><circle cx="18" cy="18" r="7.200" fill="#2b7de9" />
          </svg>
        </DockItem>
        <DockItem>
          <svg width={36} height={36} viewBox="0 0 36 36">
            <circle cx="29.500" cy="8" r="4" fill="#4a52c0" /><path d="M24 14h12v10q0 6-6 6h-6z" fill="#4a52c0" />
            <circle cx="18.500" cy="6" r="5.500" fill="#7b83eb" /><path d="M10 14h17v12q0 8-8.500 8.500T10 26z" fill="#7b83eb" />
            <rect x="0" y="9.500" width="18" height="18" rx="1.500" fill="#4348b0" />
            <text x="9" y="24" fontSize="14" fontWeight="700" textAnchor="middle" fill="#fff">T</text>
          </svg>
        </DockItem>
        <DockItem $active>
          <BraveLogo w={31} h={36} a="#ff5a00" b="#ff1f0e" />
          <Running $active />
        </DockItem>
        <DockItem>
          <svg width={36} height={36} viewBox="0 0 36 36">
            <path d="M26 0v10L4.500 27.500 1 25q-1.500-1.300 0-2.600z" fill="#0f6fb5" />
            <path d="M26 36V26L4.500 8.500 1 11q-1.500 1.300 0 2.600z" fill="#1287d2" />
            <path d="M26 0l8.500 3.500Q36 4 36 6v24q0 2-1.500 2.500L26 36q1-1 1-2.500V2.500Q27 1 26 0z" fill="#29a9f2" />
          </svg>
          <Running />
        </DockItem>
        <DockItem>
          <svg width={36} height={36} viewBox="0 0 36 36">
            <rect width="36" height="36" rx="3" fill="#4a4a4a" />
            <path d="M27 6v7.500L15.500 17 27 20.500V26L9 31v-7.500L20.500 20 9 16.500V11.500z" fill="#ff9800" />
            <path d="M9 16.500l6.500.5L27 20.500l-6.500-.5z" fill="#d97b00" />
          </svg>
        </DockItem>
        <DockItem>
          <SiWhatsapp size={36} color="#25d366" />
          <Badge $color="#4cc2ff" $x={32} $y={5}>2</Badge>
          <Running />
        </DockItem>
      </Dock>
      <Tray>
        <TrayChevron><Line w={18} h={12} color="#fff"><path d="M2 9.500L9 2.500l7 7" /></Line></TrayChevron>
        <TrayIcons>
          <Line w={24} h={22} sw={1.900} color="#fff">
            <path d="M1 8a15.500 15.500 0 0 1 22 0M4.500 11.500a10.600 10.600 0 0 1 15 0M8 15a5.700 5.700 0 0 1 8 0" /><circle cx="12" cy="18" r="2" fill="#fff" stroke="none" />
          </Line>
          <Line w={24} h={22} sw={1.700} color="#fff">
            <path d="M1 8h3.500L10 3v16l-5.500-5H1zM13.500 8q2 3 0 6M17 5q4 6 0 12M20 2q6 9 0 18" />
          </Line>
          <Line w={24} h={22} sw={1.900} color="#fff">
            <path d="M10 4.500h8a3 3 0 0 1 3 3v7.500a3 3 0 0 1-3 3H4a3 3 0 0 1-3-3v-5" /><path d="M22.500 9.500v3.500" strokeWidth={2.500} />
            <path d="M4 15.500V13l4-5.500h4v8z" fill="#fff" stroke="none" /><path d="M3.500 0h5L7 4h3L3 12l1-5H1z" fill="#fff" stroke="none" />
          </Line>
        </TrayIcons>
        <Lines $right>6:28 PM<div>5/20/2025</div></Lines>
      </Tray>
    </Taskbar>
  );
}

export default function App() {
  return (
    <Desktop>
      <GlobalStyle />
      <BrowserChrome />
      <Body>
        <LeftRail />
        <PortfolioPage />
        <ScrollTrack>
          <Arrow />
          <ScrollThumb />
          <Arrow down />
        </ScrollTrack>
        <RightRail />
      </Body>
      <WindowsTaskbar />
      <InputLanguageBar />
    </Desktop>
  );
}
